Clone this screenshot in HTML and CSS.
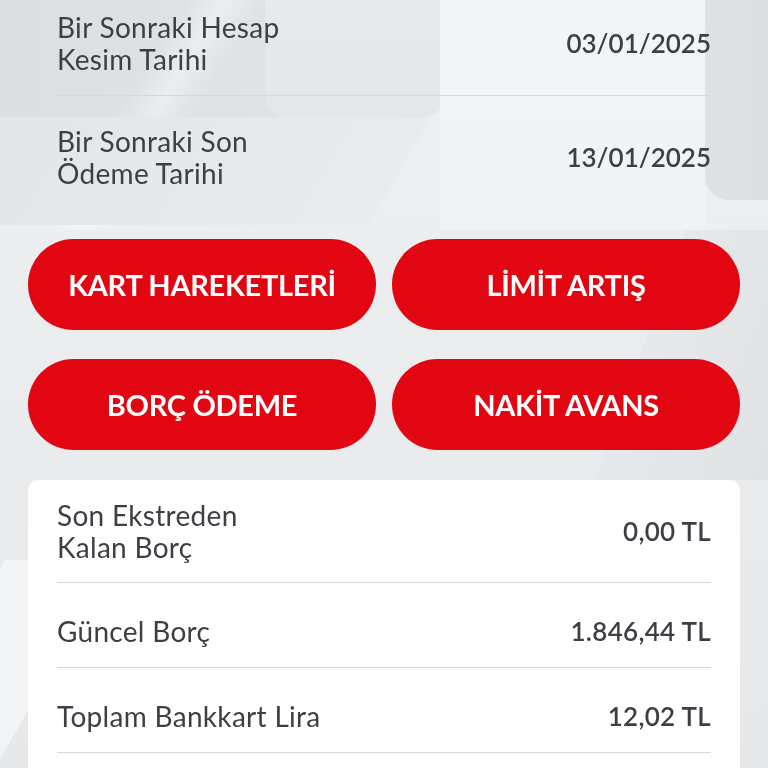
FILE: index.html
```html
<!DOCTYPE html>
<html lang="tr">
<head>
    <meta charset="UTF-8">
    <meta name="viewport" content="width=device-width, initial-scale=1.0">
    <title>Kart Detayı</title>
    <link rel="stylesheet" href="styles.css">
</head>
<body>
    <div class="backdrop">
        <div class="shape shape-top"></div>
        <div class="shape shape-streak"></div>
        <div class="shape shape-panel"></div>
        <div class="shape shape-mid"></div>
        <div class="shape shape-glow"></div>
        <div class="shape shape-right"></div>
        <div class="shape shape-side"></div>
        <div class="shape shape-low"></div>
    </div>

    <main class="screen">
        <section class="dates">
            <div class="info-row first">
                <span class="info-label">Bir Sonraki Hesap<br>Kesim Tarihi</span>
                <span class="info-value">03/01/2025</span>
            </div>
            <div class="info-row">
                <span class="info-label">Bir Sonraki Son<br>Ödeme Tarihi</span>
                <span class="info-value">13/01/2025</span>
            </div>
        </section>

        <nav class="actions">
            <button class="action-btn">KART HAREKETLERİ</button>
            <button class="action-btn">LİMİT ARTIŞ</button>
            <button class="action-btn">BORÇ ÖDEME</button>
            <button class="action-btn">NAKİT AVANS</button>
        </nav>

        <section class="card">
            <div class="card-row">
                <span class="info-label">Son Ekstreden<br>Kalan Borç</span>
                <span class="info-value">0,00 TL</span>
            </div>
            <div class="card-row single">
                <span class="info-label">Güncel Borç</span>
                <span class="info-value">1.846,44 TL</span>
            </div>
            <div class="card-row single">
                <span class="info-label">Toplam Bankkart Lira</span>
                <span class="info-value">12,02 TL</span>
            </div>
        </section>
    </main>
</body>
</html>
```

FILE: styles.css
```css
:root {
    --text-color: #3c3f44;
    --red: #e20613;
    --line: #d6d8db;
}

body {
    margin: 0;
    font-family: 'Lato', 'Roboto', sans-serif;
    color: var(--text-color);
    background: linear-gradient(180deg, #eef0f1 0%, #e9ebed 60%, #e5e7e9 100%);
    overflow: hidden;
}

/* decorative background shapes */
.backdrop {
    position: fixed;
    inset: 0;
    overflow: hidden;
    z-index: 0;
}

.shape {
    position: absolute;
}

.shape-top {
    left: 0;
    top: -30px;
    width: 445px;
    height: 147px;
    background: linear-gradient(90deg, #dcdee1 0%, #e3e5e7 100%);
    border-radius: 0 0 22px 0;
}

.shape-streak {
    left: 120px;
    top: -20px;
    width: 80px;
    height: 250px;
    background: linear-gradient(90deg, rgba(255, 255, 255, 0) 0%, rgba(255, 255, 255, 0.4) 50%, rgba(255, 255, 255, 0) 100%);
    transform: skewX(-32deg);
}

.shape-panel {
    left: 265px;
    top: -30px;
    width: 180px;
    height: 147px;
    background: linear-gradient(180deg, #e9eaec 0%, #e4e6e8 100%);
    border-radius: 0 0 22px 22px;
}

.shape-mid {
    left: -40px;
    top: 117px;
    width: 440px;
    height: 108px;
    background: linear-gradient(90deg, #e3e5e7 0%, #e9ebed 100%);
    transform: skewX(-30deg);
}

.shape-glow {
    left: 440px;
    top: -20px;
    width: 265px;
    height: 250px;
    background: linear-gradient(180deg, #f4f5f6 0%, #f1f2f3 100%);
}

.shape-right {
    left: 705px;
    top: -20px;
    width: 120px;
    height: 220px;
    background: linear-gradient(90deg, #dfe1e3 0%, #d9dbde 100%);
    border-radius: 0 0 0 24px;
}

.shape-side {
    left: 640px;
    top: 230px;
    width: 200px;
    height: 250px;
    background: linear-gradient(90deg, #e6e8ea 0%, #dfe1e4 100%);
    transform: skewX(-20deg);
}

.shape-low {
    left: -70px;
    top: 560px;
    width: 110px;
    height: 260px;
    background: rgba(255, 255, 255, 0.5);
    transform: skewX(-30deg);
}

.screen {
    position: relative;
    z-index: 1;
    padding: 0 28px;
}

.dates {
    padding: 0 29px;
}

.info-row {
    display: flex;
    justify-content: space-between;
    align-items: center;
    padding: 29px 0 22px;
    border-bottom: 1px solid var(--line);
}

.info-row.first {
    padding-top: 11px;
    padding-bottom: 20px;
}

.info-row:last-child {
    border-bottom: none;
}

.info-label {
    font-size: 28px;
    line-height: 32px;
    font-weight: 400;
    letter-spacing: 0.3px;
}

.info-value {
    font-size: 26px;
    line-height: 32px;
    font-weight: 600;
    white-space: nowrap;
}

.card .info-value {
    letter-spacing: 0.3px;
}

.actions {
    display: grid;
    grid-template-columns: 1fr 1fr;
    gap: 29px 16px;
    margin-top: 28px;
}

.action-btn {
    height: 91px;
    border: none;
    border-radius: 46px;
    background: var(--red);
    color: #fff;
    font-family: 'Lato', 'Roboto', sans-serif;
    font-size: 29px;
    font-weight: 700;
    letter-spacing: -0.3px;
    cursor: pointer;
}

.card {
    margin-top: 30px;
    background: #fff;
    border-radius: 10px;
    padding: 0 29px 40px;
}

.card-row {
    display: flex;
    justify-content: space-between;
    align-items: center;
    min-height: 46px;
    padding: 19px 0;
    border-bottom: 1px solid var(--line);
}

.card-row.single {
    padding: 25px 0 13px;
}
```
